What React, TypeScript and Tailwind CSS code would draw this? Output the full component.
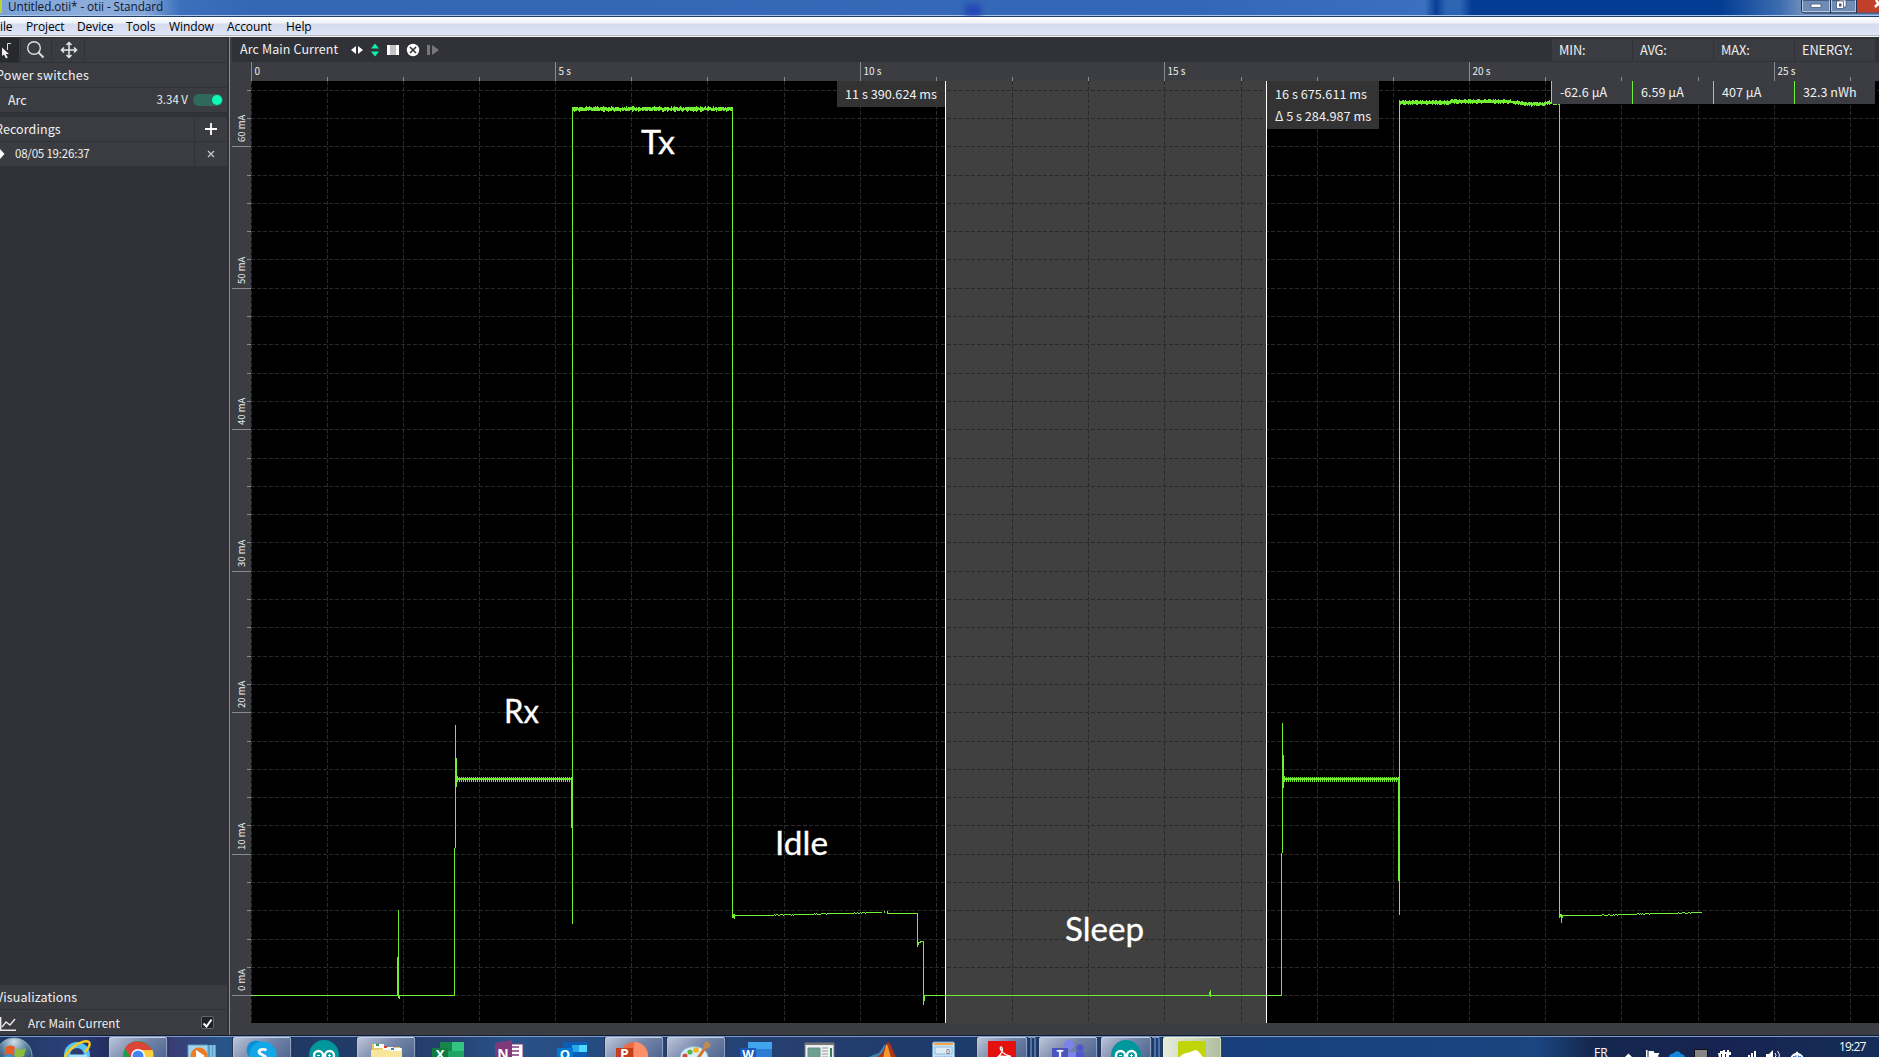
import React from "react";

const UI = "font-['Noto_Sans_CJK_SC',sans-serif]";
const GREEN = "#70f030";

const columns = Array.from({ length: 22 }, (_, k) => Math.floor(251 + 76.16 * k));
const rows = Array.from({ length: 33 }, (_, k) => Math.round(995.2 - 28.3 * k));

function noise(i: number) {
  const v = Math.sin(i * 12.9898) * 43758.5453;
  return v - Math.floor(v);
}

function band(x0: number, x1: number, center: (x: number) => number, half: number) {
  let d = "";
  for (let x = x0; x <= x1; x++) {
    const c = center(x);
    const top = Math.round(c - 1 - noise(x) * half);
    const bottom = Math.round(c + 1 + noise(x + 777) * half);
    d += `M${x} ${top}h1V${bottom}h-1z`;
  }
  return d;
}

function comb(x0: number, x1: number) {
  let d = `M${x0} 778H${x1}V780H${x0}z`;
  for (let x = x0; x < x1; x += 2) d += `M${x} 777h1v5h-1z`;
  return d;
}

function idle(points: number[][]) {
  let d = "";
  for (let i = 0; i < points.length - 1; i++) {
    const [x0, y0] = points[i];
    const [x1, y1] = points[i + 1];
    for (let x = x0; x < x1; x++) {
      const y = Math.round(y0 + ((y1 - y0) * (x - x0)) / (x1 - x0) + (noise(x) - 0.5) * 0.7);
      d += `M${x} ${y}h1v1h-1z`;
    }
  }
  return d;
}

const v = (x: number, a: number, b: number) => `M${x} ${a}h1V${b}h-1z`;
const h = (y: number, a: number, b: number) => `M${a} ${y}H${b}v1H${a}z`;

const trace = [
  h(995, 251, 455), v(397, 957, 996), v(398, 910, 998), v(399, 995, 999),
  v(454, 848, 996), v(455, 725, 848), v(456, 758, 787), v(457, 776, 782),
  comb(457, 572), v(571, 777, 828), v(572, 108, 924),
  band(572, 732, () => 109, 1.7), v(732, 107, 918), v(733, 914, 918), v(734, 914, 919),
  idle([[735, 915], [765, 915], [800, 914], [840, 913], [882, 912]]),
  v(884, 911, 913), v(887, 911, 914), idle([[888, 913], [917, 913]]),
  v(917, 913, 947), v(918, 942, 945), h(942, 919, 921), h(941, 920, 924),
  v(923, 941, 1005), v(924, 995, 1001), h(995, 924, 1282),
  v(1209, 992, 996), v(1210, 990, 997),
  v(1281, 853, 996), v(1282, 723, 853), v(1283, 755, 788), v(1284, 776, 782),
  comb(1284, 1399), v(1398, 777, 881), v(1399, 102, 915),
  band(1399, 1559, (x) => (x < 1450 ? 102.5 : x < 1508 ? 101.5 : x < 1530 ? 101.5 + (x - 1508) / 8 : x < 1545 ? 104 : 103), 1.6),
  v(1559, 104, 918), v(1560, 914, 917), v(1561, 914, 923), v(1562, 915, 918),
  idle([[1563, 915], [1600, 914.8], [1625, 914], [1665, 913], [1702, 912]]),
].join("");

function TimeRuler() {
  return (
    <svg className="block h-[19px] w-[1647px] shrink-0" viewBox="232 62 1647 19" shapeRendering="crispEdges">
      {columns.map((x, k) => (
        <rect key={x} x={x} y={k % 4 ? 77 : 62} width="1" height={k % 4 ? 4 : 19} fill="#8b8b8e" />
      ))}
      {["0", "5 s", "10 s", "15 s", "20 s", "25 s"].map((t, i) => (
        <text key={t} x={columns[i * 4] + 3.5} y="75" fontSize="10" fill="#ececec" className={UI}>{t}</text>
      ))}
    </svg>
  );
}

function CurrentRuler() {
  return (
    <svg className="block h-[942px] w-[19px] shrink-0" viewBox="232 81 19 942" shapeRendering="crispEdges">
      {rows.map((y, k) => (
        <rect key={y} x={k % 5 ? 247 : 232} y={y} width={k % 5 ? 4 : 19} height="1" fill="#8b8b8e" />
      ))}
      {[0, 10, 20, 30, 40, 50, 60].map((m, i) => (
        <text key={m} transform={`translate(245 ${rows[i * 5] - 4}) rotate(-90)`} fontSize="9.5" fill="#ececec" className={UI}>{m} mA</text>
      ))}
    </svg>
  );
}

const marks: [string, number, number, number][] = [
  ["Tx", 641, 154, 34], ["Rx", 504, 723, 35], ["Idle", 775, 855, 53], ["Sleep", 1065, 941, 79],
];

function Plot() {
  return (
    <svg className="block h-[942px] w-[1628px] bg-black" viewBox="251 81 1628 942">
      <rect x="946" y="81" width="320" height="942" fill="#404040" />
      <g stroke="#2a2a2a" strokeDasharray="4 2" shapeRendering="crispEdges">
        {columns.map((x) => <line key={x} x1={x + 0.5} x2={x + 0.5} y1="81" y2="1022" />)}
        {rows.map((y) => <line key={y} x1="251" x2="1879" y1={y + 0.5} y2={y + 0.5} />)}
      </g>
      <path d={trace} fill={GREEN} shapeRendering="crispEdges" />
      <path d="M945 81h1v942h-1zM1266 81h1v942h-1z" fill="#fff" shapeRendering="crispEdges" />
      {marks.map(([t, x, y, w]) => (
        <text key={t} x={x} y={y} textLength={w} lengthAdjust="spacingAndGlyphs" fontSize="32" fill="#fff" stroke="#fff" strokeWidth=".3" className="font-['Lato',sans-serif]">{t}</text>
      ))}
    </svg>
  );
}

const stats = [["MIN:", "-62.6 µA"], ["AVG:", "6.59 µA"], ["MAX:", "407 µA"], ["ENERGY:", "32.3 nWh"]];

function ChartPanel() {
  return (
    <main className={`flex w-[1647px] flex-col bg-[#3c3d42] text-[#f0f0f0] ${UI}`}>
      <header className="flex h-[25px] items-center bg-[#313237] pl-2">
        <span className="w-[111px] pb-px text-[12.5px] leading-6 tracking-[0.1px] whitespace-nowrap">Arc Main Current</span>
        <svg width="90" height="16" viewBox="351 41 90 16" fill="#fff">
          <path d="M351 49l5-4v8zM363 49l-5-4v8z" />
          <path d="M371 47.5l4-5 4 5zM371 50.5l4 5 4-5z" fill="#0df2ac" />
          <path d="M387 44h12v10h-12z" /><path d="M390 44h6v10h-6z" fill="#c3c3c3" />
          <circle cx="413" cy="49" r="6.2" />
          <path d="M410 46l6 6M416 46l-6 6" stroke="#303136" strokeWidth="1.6" />
          <path d="M427 44h3v10h-3zM432 44l7 5-7 5z" fill="#77777b" />
        </svg>
        <div className="mr-1 ml-auto flex h-[23px] gap-px self-end pb-px">
          {stats.map(([label]) => (
            <div key={label} className="flex w-20 items-center bg-[#3b3c41] pl-[7px] text-[12.8px] tracking-[-0.1px]">{label}</div>
          ))}
        </div>
      </header>
      <TimeRuler />
      <div className="relative flex">
        <CurrentRuler />
        <Plot />
        <div className="absolute top-0 left-[605px] flex h-[26px] w-[108px] items-center bg-[#363636]/95 pb-px pl-2 text-[12.7px] whitespace-nowrap">11 s 390.624 ms</div>
        <div className="absolute top-0 left-[1035px] h-[48px] w-[112px] bg-[#363636]/95 pt-[2px] pl-2 text-[12.7px] leading-[22px] whitespace-nowrap">
          <div>16 s 675.611 ms</div>
          <div>Δ 5 s 284.987 ms</div>
        </div>
        <div className="absolute top-0 right-1 flex h-[23px] bg-[#3b3c41]">
          {stats.map(([label, value]) => (
            <div key={label} className="flex w-[81px] items-center border-l border-[#70f030] pl-2 text-[12.6px] whitespace-nowrap">{value}</div>
          ))}
        </div>
      </div>
    </main>
  );
}

function Sidebar() {
  const row = "flex h-6 shrink-0 items-center bg-[#3b3c41]";
  return (
    <aside className={`flex w-[232px] shrink-0 flex-col border-r-2 border-[#3c3d42] bg-[#313237] text-[#f0f0f0] ${UI}`}>
      <div className="flex min-h-0 flex-1 flex-col border-r border-[#8c8d90] pt-px pr-[2px]">
        <div className="flex h-6 shrink-0 gap-px bg-[#3b3c41]">
          <div className="w-[19px] bg-[#28292d]">
            <svg width="19" height="24" viewBox="0 38 19 24" fill="none">
              <path d="M2 47.5v8.500l2-1.500 2 4 1.800-1-2-3.500H9z" fill="#eee" />
              <path d="M11 43.500H7.500V50" stroke="#ddd" strokeWidth="1" />
            </svg>
          </div>
          <div className="w-8 border-x border-[#313237]">
            <svg width="30" height="24" viewBox="21 38 30 24" fill="none" stroke="#dedede">
              <circle cx="34" cy="48" r="6.300" strokeWidth="1.400" /><path d="M38.500 52.500l5 5" strokeWidth="2" />
            </svg>
          </div>
          <div className="w-8 border-r border-[#313237]">
            <svg width="31" height="24" viewBox="53 38 31 24" fill="none" stroke="#e8e8e8" strokeWidth="1.500">
              <path d="M69 43v14M62 50h14M66.500 45l2.500-2.500 2.500 2.500M66.500 55l2.500 2.500 2.500-2.500M64 47.500L61.500 50l2.500 2.500M74 47.500l2.500 2.500-2.500 2.500" />
            </svg>
          </div>
        </div>
        <div className={`${row} mt-px text-[12.5px] tracking-[0.2px]`}><span className="-ml-[4px]">Power switches</span></div>
        <div className={`${row} mt-px pl-2 text-[11.5px]`}>
          <span className="text-[12.5px]">Arc</span>
          <span className="ml-auto">3.34 V</span>
          <span className="mr-1 ml-[5px] flex h-3 w-[30px] justify-end rounded-full bg-[#2f695c] p-px">
            <span className="size-[10px] rounded-full bg-[#0dfbb5]" />
          </span>
        </div>
        <div className="mt-[5px] flex h-6 shrink-0 gap-px text-[12.5px] tracking-[0.1px]">
          <div className="flex w-[194px] items-center bg-[#3b3c41]"><span className="-ml-[5px]">Recordings</span></div>
          <div className="flex flex-1 items-center justify-center bg-[#3b3c41]">
            <svg width="12" height="12"><path d="M6 0v12M0 6h12" stroke="#fff" strokeWidth="1.800" /></svg>
          </div>
        </div>
        <div className="mt-px flex h-6 shrink-0 gap-px text-[11.5px]">
          <div className="flex w-[194px] items-center bg-[#3b3c41]">
            <svg width="5" height="10"><path d="M0 0l4.500 5L0 10z" fill="#fff" /></svg>
            <span className="ml-[10px] tracking-[-0.2px]">08/05 19:26:37</span>
          </div>
          <div className="flex flex-1 items-center justify-center bg-[#3b3c41]">
            <svg width="8" height="8"><path d="M1 1l6 6M7 1l-6 6" stroke="#c8c8c8" strokeWidth="1.300" /></svg>
          </div>
        </div>
        <div className={`${row} mt-auto text-[12.5px] tracking-[0.1px]`}><span className="-ml-[4px]">Visualizations</span></div>
        <div className={`${row} mt-px h-[25px]! text-[11.7px]`}>
          <svg width="28" height="24" viewBox="0 1010 28 24" fill="none" stroke="#e8e8e8" strokeWidth="1.400">
            <path d="M.7 1016v13.300H16M2 1026l4-5 4 3 5-6" />
          </svg>
          <span className="tracking-[0.1px]">Arc Main Current</span>
          <span className="mr-[13px] ml-auto flex size-[13px] items-center justify-center rounded-[2px] border border-[#66676a] bg-[#202124]">
            <svg width="11" height="10"><path d="M1.500 5.500l3 3 5-7" fill="none" stroke="#fff" strokeWidth="2" /></svg>
          </span>
        </div>
      </div>
    </aside>
  );
}

const Arduino = ({ cx }: { cx: number }) => (
  <g>
    <circle cx={cx} cy="19" r="15" fill="#00979c" />
    <g fill="none" stroke="#fff" strokeWidth="2.400"><circle cx={cx - 5.5} cy="19.500" r="4.500" /><circle cx={cx + 5.5} cy="19.500" r="4.500" /></g>
    <path d={`M${cx - 7} 19.500h3M${cx + 4} 19.500h3M${cx + 5.5} 18v3`} stroke="#fff" />
  </g>
);

const Letter = ({ x, t, size = 13 }: { x: number; t: string; size?: number }) => (
  <text x={x} y="23" fontSize={size} fontWeight="700" fill="#fff" textAnchor="middle" className="font-['Open_Sans',sans-serif]">{t}</text>
);

type Task = { name: string; frame?: "single" | "stack" | "active"; art: React.ReactNode };

const tasks: Task[] = [
  { name: "ie", art: <g><circle cx="32" cy="19" r="10" fill="none" stroke="#56c5f4" strokeWidth="6" /><path d="M24 20h18" stroke="#9be4ff" strokeWidth="3" /><path d="M20 25C17 17 37 2 44 6c2 2-1 7-4 10" fill="none" stroke="#f8ca1c" strokeWidth="2.400" /></g> },
  { name: "chrome", frame: "single", art: <g><circle cx="31" cy="20" r="15" fill="#1e9e4c" /><path d="M31 14h14.500a15 15 0 0 1 .5 9H31z" fill="#fdd03b" /><path d="M18 12.500l7 11 6-9.500h14C41 5 24 1 18 12.500z" fill="#dc4437" /><circle cx="31" cy="20" r="7" fill="#fff" /><circle cx="31" cy="20" r="5.500" fill="#4285f4" /></g> },
  { name: "media", art: <g><path d="M23 9h24v13H23z" fill="#559fcb" /><path d="M19 9h20v13H19z" fill="#a4d3eb" stroke="#5a9bc4" /><path d="M42 9v13M45 9v13" stroke="#b6dcf0" /><circle cx="30" cy="20" r="8.500" fill="#ef7c22" /><path d="M27 14l9 6-9 6z" fill="#fff" /></g> },
  { name: "skype", frame: "single", art: <g><circle cx="25" cy="14" r="9.500" fill="#0c8ed5" /><circle cx="32" cy="19" r="13.500" fill="#10a8e8" /><text x="31" y="26" fontSize="20" fontWeight="700" fill="#fff" textAnchor="middle" className="font-['Open_Sans',sans-serif]">S</text></g> },
  { name: "arduino", art: <Arduino cx={31} /> },
  { name: "explorer", frame: "single", art: <g><path d="M17 22V8h10l2 3h16v11z" fill="#e8c566" /><path d="M16 22V14l14-1 3-1h14v10z" fill="#f8e69c" /><path d="M19 8h10v4H19zM28 11h10v3H28zM36 12h10v3H36z" fill="#fff" /><path d="M21 8h3v2h-3z" fill="#24a13b" /><path d="M29 10h3v2h-3z" fill="#d6442d" /><path d="M36 12h3v2h-3z" fill="#1f8bdc" /></g> },
  { name: "excel", art: <g><path d="M23 6h24v16H23z" fill="#21a366" /><path d="M35 6h12v9H35z" fill="#33c481" /><path d="M23 6h12v9H23z" fill="#17864c" /><path d="M15 12h16v10H15z" fill="#107c41" /><Letter x={23} t="X" /></g> },
  { name: "onenote", art: <g><path d="M32 8h12v14H32z" fill="#fff" stroke="#80397b" /><path d="M32 11h8M32 15h8M32 19h8" stroke="#80397b" strokeWidth="1.500" /><path d="M16 7l17-3v18H16z" fill="#80397b" /><Letter x={24} t="N" size={14} /></g> },
  { name: "outlook", art: <g><path d="M22 6h24v16H22z" fill="#0a5fb4" /><path d="M31 9h15v7H31z" fill="#28a8ea" /><path d="M38 9h8v7h-8z" fill="#50d9ff" /><path d="M16 12h16v10H16z" fill="#0078d4" /><Letter x={24} t="O" /></g> },
  { name: "powerpoint", frame: "single", art: <g><circle cx="31" cy="20" r="14" fill="#ed6c47" /><path d="M31 6a14 14 0 0 1 14 16H31z" fill="#ff8f6b" /><path d="M13 12h17v10H13z" fill="#c43e1c" /><Letter x={21.5} t="P" size={14} /></g> },
  { name: "paint", frame: "single", art: <g><ellipse cx="29" cy="21" rx="14" ry="10.500" fill="#d8eef8" stroke="#83b8d3" /><circle cx="31" cy="14" r="2.800" fill="#f1b51f" /><circle cx="25" cy="16" r="2.600" fill="#66b345" /><circle cx="20" cy="20" r="2.500" fill="#d84b3c" /><path d="M33 22l7-10" stroke="#d67427" strokeWidth="3" /><path d="M38 11l1-4 2-2 5 3-2 4-4 1z" fill="#b98b55" /></g> },
  { name: "word", art: <g><path d="M21 6h24v16H21z" fill="#41a5ee" /><path d="M21 13h24v9H21z" fill="#2b7cd3" /><path d="M13 12h16v10H13z" fill="#185abd" /><Letter x={21} t="W" size={12} /></g> },
  { name: "viewer", art: <g><path d="M16 7h29v15H16z" fill="#edf0f1" stroke="#777" /><path d="M16 7h29v2H16z" fill="#777" /><path d="M19 12h12v10H19z" fill="#6aa18f" stroke="#789" /><path d="M33 12h6M33 15h6M33 18h6M33 21h6" stroke="#999" /><path d="M41 12h2v10h-2z" fill="#3b7b59" /></g> },
  { name: "matlab", art: <g><path d="M16 22l6-3 6-2 6-9 4 14z" fill="#3f84b5" /><path d="M25 22l6-5 5-10c2-3 4 2 9 15z" fill="#b43316" /><path d="M35 9c1-3 3 5 5 13h-8z" fill="#f39b2c" /></g> },
  { name: "calculator", art: <g><rect x="19.500" y="6" width="22" height="18" rx="1.500" fill="#c7e1f4" stroke="#6c9ec4" /><path d="M21 7h19v2H21z" fill="#f2a545" /><path d="M22 11h17v7H22z" fill="#dcecf6" stroke="#7ba8c8" strokeWidth=".7" /><text x="33" y="17.500" fontSize="7" fill="#31557c" className="font-['Open_Sans',sans-serif]">0</text><path d="M22 21h17" stroke="#759ac0" strokeDasharray="2 1" /></g> },
  { name: "acrobat", frame: "stack", art: <g><path d="M13 5h28v17H13z" fill="#e4120f" /><path d="M20 23c9-5 8-12 6-12s0 7 9 9c2 1-3 1-11 0" fill="none" stroke="#fff" strokeWidth="1.300" /></g> },
  { name: "teams", frame: "single", art: <g><circle cx="32" cy="9" r="5" fill="#7b83eb" /><circle cx="43" cy="12" r="3.700" fill="#5059c9" /><path d="M25 16h14v6H25z" fill="#7b83eb" /><path d="M39 16h8v6h-8z" fill="#5059c9" /><path d="M15 12h16v10H15z" fill="#4b53bc" /><Letter x={23} t="T" size={12} /></g> },
  { name: "arduino ide", frame: "stack", art: <Arduino cx={27} /> },
  { name: "otii", frame: "active", art: <g><rect x="17" y="5" width="28" height="22" rx="2" fill="#c1d60a" /><path d="M18 23c1-4 5-6 10-6.500l6.500-2.500 2.500 1 5 6v2z" fill="#fff" /></g> },
];

function TaskButton({ frame, art }: Task) {
  const w = frame === "stack" ? 50 : 58;
  return (
    <svg className="block h-[22px] w-[62px] shrink-0 overflow-hidden" viewBox="0 0 62 22">
      {frame === "stack" && <path d="M53 1.500h3V22M56.500 1.500H60V22" fill="none" stroke="#8fa6c8" />}
      {frame && <rect x="2" y="1.500" width={w} height="30" rx="2" fill={frame === "active" ? "url(#taskActive)" : "url(#taskFrame)"} stroke={frame === "active" ? "#eef3d0" : "#c3cfe2"} />}
      {frame && <path d={`M1.500 22V1M${w + 2.7} 22V1`} stroke="#12213f" strokeWidth=".8" />}
      {art}
    </svg>
  );
}

function Taskbar() {
  return (
    <footer className="flex h-[22px] shrink-0 overflow-hidden border-t border-[#0f1c33] bg-[linear-gradient(90deg,#1c3961_0px,#2d3f78_70px,#232c5f_110px,#3a3c75_170px,#27568a_225px,#1f3864_290px,#25406e_440px,#2a5288_510px,#24467a_660px,#253f70_800px,#1d3a6b_950px,#17407d_1250px,#1a457f_1540px,#14284f_1590px,#172352_1720px,#152e57_1879px)] shadow-[inset_0_1px_0_#7e9ac5]">
      <svg className="absolute size-0">
        <defs>
          <linearGradient id="taskFrame" x1="0" y1="0" x2="1" y2=".6"><stop offset="0" stopColor="#bdc6da" /><stop offset=".55" stopColor="#7484a8" /><stop offset="1" stopColor="#506892" /></linearGradient>
          <linearGradient id="taskActive" x1="0" y1="0" x2="1" y2="0"><stop offset="0" stopColor="#e6ebdc" /><stop offset=".5" stopColor="#cfd8c0" /><stop offset="1" stopColor="#adbd9e" /></linearGradient>
          <radialGradient id="orb" cx=".5" cy=".1" r=".8"><stop offset="0" stopColor="#d1dfe9" /><stop offset=".5" stopColor="#547b98" /><stop offset="1" stopColor="#163b5c" /></radialGradient>
        </defs>
      </svg>
      <svg className="block h-[22px] w-[45px] shrink-0" viewBox="0 0 45 22">
        <circle cx="14" cy="20" r="18" fill="url(#orb)" stroke="#8ba8bd" />
        <path d="M6 11c3-2 6-2 9 0l-2 8c-3-2-6-2-9 0z" fill="#e85c28" />
        <path d="M16 12c3 2 6 2 10 0l-2 8c-4 2-7 2-10 0z" fill="#8cbc3c" />
        <path d="M4 20c3-2 6-2 9 0v3H3z" fill="#3d94d6" /><path d="M14 21c3 2 6 2 9 0v3h-9z" fill="#f3c33b" />
      </svg>
      {tasks.map((t) => <TaskButton key={t.name} {...t} />)}
      <div className="ml-auto flex text-white">
        <span className="w-[25px] pt-[8px] font-['Open_Sans',sans-serif] text-[12px] leading-[18px]">FR</span>
        <svg className="block h-[22px] w-[220px]" viewBox="1619 1035 220 22" fill="#fff">
          <path d="M1624 1057l4.500-4.500 4.500 4.500z" />
          <path d="M1646 1049h1.500v8h-1.500zM1648.500 1050h5l1 2h5l-1.500 3 1 2h-10.500z" />
          <path d="M1669 1057c0-5 4-4 5-5 2-3 6-2 7 1 3 0 4 2 4 4z" fill="#1186dc" />
          <path d="M1694.500 1048.500h13v9h-13z" fill="#858585" stroke="#111" />
          <path d="M1718 1052h2v-2h3v-1h2v2h2v-2h2v2h2v3h-2v3h-10zM1721 1053v4h1v-4zM1725 1053v4h1v-4z" fillRule="evenodd" />
          <path d="M1745 1056h2v1h-2zM1748 1054h2v3h-2zM1751 1052h2v5h-2zM1754 1050h2v7h-2z" />
          <path d="M1766 1053h3l4-4v8h-7z" /><path d="M1775 1052q2 2 0 5M1777.500 1050q3 3 1.500 7" fill="none" stroke="#fff" />
          <path d="M1791 1057a6.500 7 0 0 1 12 0z" fill="#2d70e8" stroke="#fff" strokeWidth="1.500" /><path d="M1797 1051v6M1794 1055l3-3.500 3 3.500" fill="none" stroke="#fff" strokeWidth="1.500" />
        </svg>
        <span className="w-10 pt-[2px] font-['Open_Sans',sans-serif] text-[12px] leading-[18px] tracking-[-0.8px]">19:27</span>
      </div>
    </footer>
  );
}

function TitleBar() {
  return (
    <div className="relative flex h-[17px] shrink-0 justify-between border-b border-[#1c3c6d] bg-[linear-gradient(90deg,#7ba1d6_0px,#8daddb_90px,#85a7d9_145px,#3c70bb_180px,#3366b3_260px,#3569b7_900px,#3267b7_1170px,#3b70c0_1425px,#083f96_1436px,#2e65b3_1446px,#2e65b3_1460px,#043c93_1472px,#033c93_1720px,#3c6db0_1780px,#7393bd_1805px,#7799c8_1879px)] shadow-[inset_0_-1px_0_#a9c4e8]">
      <div className="flex items-start">
        <span className="mr-[6px] h-[13px] w-[2px] bg-[#b7d532]" />
        <span className="font-['Open_Sans',sans-serif] text-[11.8px] leading-[13px] tracking-[-0.1px] whitespace-nowrap text-[#10182a]">Untitled.otii* - otii - Standard</span>
      </div>
      <svg className="block shrink-0" width="79" height="14" viewBox="1800 0 79 14">
        <path d="M1801.500 0v10q0 3 3 3H1879V0z" fill="#6f8cb7" stroke="#1d3150" />
        <path d="M1857 0h22v12.500h-22z" fill="#c0402a" /><path d="M1802.500 0v11.500h27V0M1831.500 0v11.500h24V0" fill="none" stroke="#c8d6e8" strokeWidth=".8" />
        <path d="M1830.500 0v13M1856.500 0v13" stroke="#1d3150" />
        <path d="M1811 4h10v3.500h-10z" fill="#fff" stroke="#49566e" strokeWidth=".8" />
        <path d="M1839 0h7v7h-7z" fill="#fff" stroke="#49566e" strokeWidth=".8" /><path d="M1836.500 1h7v7.500h-7z" fill="#fff" stroke="#49566e" strokeWidth=".8" /><path d="M1839 3.500h2.500v3h-2.500z" fill="#49566e" />
        <path d="M1875 7l7-7M1876 0l5 7" stroke="#fff" strokeWidth="2.500" />
      </svg>
      <span className="absolute top-[4px] left-[965px] h-3 w-4 bg-[#2446b4] blur-[3px]" />
    </div>
  );
}

export default function App() {
  return (
    <div className="flex h-[1057px] w-[1879px] flex-col overflow-hidden bg-[#3c3d42]">
      <TitleBar />
      <nav className="relative flex h-5 shrink-0 items-center border-b border-[#f5f5f5] bg-[linear-gradient(#ffffff_0px,#eef1f8_6px,#d5dcee_7px,#dfe5f5_18px,#b5b8c0_18px)] font-['Open_Sans',sans-serif] text-[12px] tracking-[-0.1px] text-black">
        <span className="w-[26px]">ile</span>
        <span className="w-[51px]">Project</span>
        <span className="w-[49px]">Device</span>
        <span className="w-[43px]">Tools</span>
        <span className="w-[58px]">Window</span>
        <span className="w-[59px]">Account</span>
        <span>Help</span>
      </nav>
      <div className="flex h-[998px] shrink-0">
        <Sidebar />
        <ChartPanel />
      </div>
      <Taskbar />
    </div>
  );
}
